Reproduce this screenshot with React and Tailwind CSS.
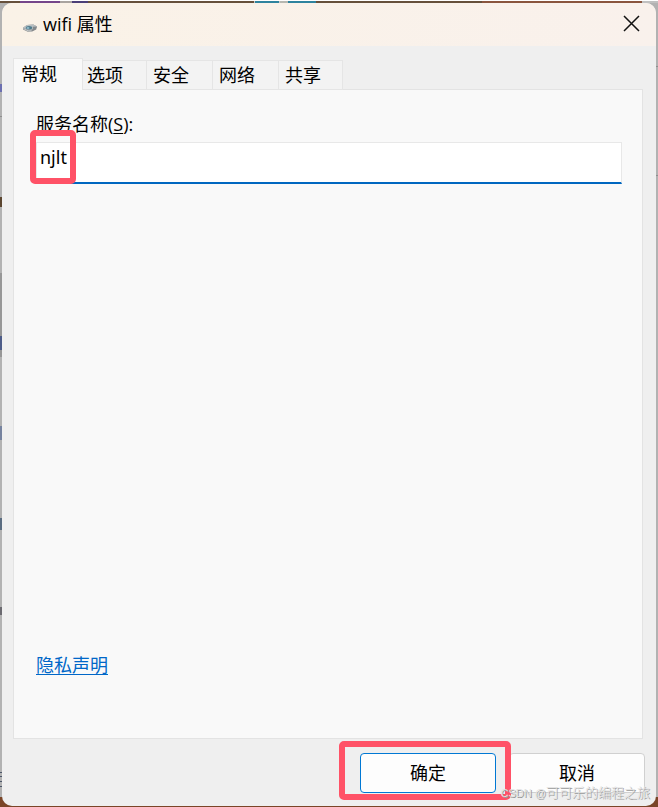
import React from "react";

const tabs = ["常规", "选项", "安全", "网络", "共享"];

function DeviceIcon() {
  return (
    <svg width="16" height="16" viewBox="0 0 16 16" aria-hidden="true">
      <path d="M1 9.8 5 7l6.4-.4L15 8.4l-.8 3-4 2.2-4.4.2L1 11.6z" fill="#85898c" />
      <path d="M1 9.8 5 7l6.4-.4L15 8.4l-4.8 3.2-4 .2z" fill="#b9bfc2" />
      <path d="M1.4 10.6 6 12.8h3.6" stroke="#d6dadc" strokeWidth=".8" fill="none" />
      <ellipse cx="7" cy="9.8" rx="3.2" ry="1.7" fill="#4f7b8c" />
      <ellipse cx="6" cy="10" rx="1.5" ry=".8" fill="#a9d3e2" />
      <path d="m11 8.8 3.6-.2-.8 2.4-3 1.6z" fill="#84898c" />
    </svg>
  );
}

function Desktop() {
  return (
    <div className="absolute inset-0 bg-[#b2b2b2]" aria-hidden="true">
      <div className="flex h-[3px] border-t border-white bg-[#66503b]">
        <div className="w-5" />
        <div className="w-10 bg-[#75458a]" />
        <div className="w-3 bg-[#a9a4a0]" />
        <div className="w-4 bg-[#4b3f78]" />
        <div className="flex-1" />
        <div className="w-[26px] border-x border-[#c8c8c8] bg-[#2e839e]" />
        <div className="w-2 bg-[#b7b7b0]" />
        <div className="w-[28px] bg-[#2e839e]" />
        <div className="flex-1 bg-[#66503b]" />
        <div className="w-40 bg-[#8a553e]" />
        <div className="w-4 bg-[#c0c0c0]" />
      </div>
      <div className="absolute right-0 top-[66px] h-px w-0.5 bg-[#8f8f8f]" />
      <div className="absolute right-0 top-[175px] h-px w-0.5 bg-[#8f8f8f]" />
      <div className="absolute left-0 top-[116px] h-px w-0.5 bg-[#8f8f8f]" />
      <div className="absolute left-0 top-[84px] h-2 w-0.5 bg-[#6b6fb0]" />
      <div className="absolute left-0 top-[197px] h-2.5 w-0.5 bg-[#5b452f]" />
      <div className="absolute left-0 top-[273px] h-[84px] w-0.5 bg-[#979797]" />
      <div className="absolute left-0 top-[336px] h-3.5 w-0.5 bg-[#4d5c88]" />
      <div className="absolute left-0 top-[426px] h-3.5 w-0.5 bg-[#76839f]" />
      <div className="absolute left-0 top-[518px] h-3 w-0.5 bg-[#5a6c80]" />
      <div className="absolute left-0 top-[607px] h-2 w-0.5 bg-[#6b6a70]" />
      <div className="absolute left-0 top-[772px] h-px w-0.5 bg-[#4b5668]" />
      <div className="absolute left-0 top-[776px] h-px w-0.5 bg-[#4b5668]" />
      <div className="absolute left-0 top-[781px] h-px w-0.5 bg-[#4b5668]" />
      <div className="absolute left-0 top-[786px] h-px w-0.5 bg-[#4b5668]" />
      <div className="absolute inset-x-0 bottom-0 h-[10px] bg-[#7a4527]" />
    </div>
  );
}

export default function App() {
  return (
    <div className="relative flex min-h-screen flex-col overflow-hidden px-0.5 pt-[3px] pb-px font-['Noto_Sans','Noto_Sans_CJK_SC',sans-serif] text-lg leading-6 text-black">
      <Desktop />
      <main className="relative flex flex-1 flex-col overflow-hidden rounded-[10px] bg-[#efefef]">
        <header className="flex h-[43px] items-center bg-linear-to-r from-[#faf2e7] to-[#f9f1ec] pr-4 pb-0.5 pl-5">
          <span className="pt-1">
            <DeviceIcon />
          </span>
          <h1 className="ml-[5px] flex-1 font-['Open_Sans','Noto_Sans_CJK_SC',sans-serif]">wifi 属性</h1>
          <button type="button" aria-label="关闭" className="flex size-[17px] items-center justify-center">
            <svg width="17" height="17" viewBox="0 0 17 17" aria-hidden="true">
              <path d="M1 1 16 16M16 1 1 16" stroke="#111" strokeWidth="1.5" fill="none" />
            </svg>
          </button>
        </header>

        <div className="flex flex-1 flex-col pt-3 pr-[13px] pl-[11px]">
          <div role="tablist" className="relative z-10 -mb-px flex items-end">
            {tabs.map((tab, i) => (
              <button
                key={tab}
                type="button"
                role="tab"
                aria-selected={i === 0}
                className={
                  i === 0
                    ? "h-8 w-[70px] border border-b-0 border-[#e5e5e5] bg-[#f9f9f9] pb-0.5 pl-[7px] text-left"
                    : i === 1
                      ? "h-[30px] w-16 border-y border-r border-[#e5e5e5] bg-[#f3f3f3] pl-1 text-left"
                      : i === 4
                        ? "h-[30px] w-16 border-y border-r border-[#e5e5e5] bg-[#f3f3f3] pl-1.5 text-left"
                        : "h-[30px] w-[66px] border-y border-r border-[#e5e5e5] bg-[#f3f3f3] pl-1.5 text-left"
                }
              >
                {tab}
              </button>
            ))}
          </div>

          <section className="flex flex-1 flex-col items-start border border-[#e3e3e3] bg-[#f9f9f9] pt-[22px] pr-5 pb-[61px] pl-[22px]">
            <label htmlFor="service" className="font-['Open_Sans','Noto_Sans_CJK_SC',sans-serif]">
              服务名称(<span className="underline underline-offset-2">S</span>):
            </label>
            <div className="relative mt-1.5 w-full">
              <input
                id="service"
                type="text"
                defaultValue="njlt"
                className="block h-[42px] w-full border border-b-2 border-[#e8e8e8] border-b-[#0067c0] bg-white px-[3px] pb-3 font-['Noto_Sans',sans-serif] outline-none"
              />
              <div className="pointer-events-none absolute -top-3 -left-1.5 h-[54px] w-[46px] rounded-[5px] border-6 border-[#ff5267]" />
            </div>
            <a href="#privacy" className="mt-auto text-[#0067c8] underline underline-offset-2">
              隐私声明
            </a>
          </section>
        </div>

        <footer className="flex justify-end gap-[13px] px-[11px] pt-[14px] pb-[13px]">
          <div className="relative">
            <button type="button" className="block h-10 w-[136px] rounded-[4px] border border-[#0078d4] bg-[#fdfdfd]">
              确定
            </button>
            <div className="pointer-events-none absolute -top-3 -left-[21px] z-10 h-[59px] w-[172px] rounded-[5px] border-6 border-[#ff5267]" />
          </div>
          <button type="button" className="h-10 w-[136px] rounded-[4px] border border-[#d0d0d0] bg-[#fdfdfd]">
            取消
          </button>
        </footer>
      </main>
      <p className="pointer-events-none absolute right-2 bottom-1 z-20 font-['Liberation_Sans','Noto_Sans_CJK_SC',sans-serif] text-[13px] leading-5 font-light whitespace-nowrap text-[#e2e2e2] [text-shadow:1px_1px_0_#999]">
        <span className="text-[11px]">CSDN @</span>可可乐的编程之旅
      </p>
    </div>
  );
}
